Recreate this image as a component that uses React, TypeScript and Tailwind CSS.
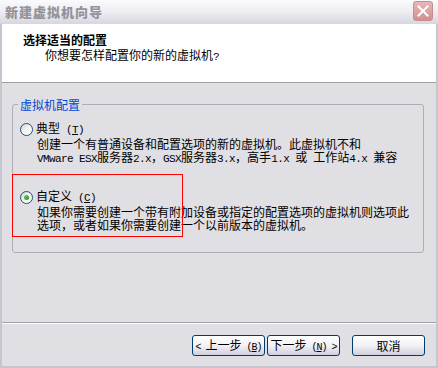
import React from "react";

function M({ children, tight }: { children: React.ReactNode; tight?: boolean }) {
  return (
    <span
      className={
        tight
          ? "font-['Liberation_Mono',monospace] text-[10px] tracking-[-1px]"
          : "font-['Liberation_Mono',monospace] text-[11px] tracking-[-0.6px]"
      }
    >
      {children}
    </span>
  );
}

function Radio({ checked }: { checked?: boolean }) {
  return (
    <span className="flex h-[13px] w-[13px] shrink-0 items-center justify-center rounded-full border border-[#1c5180] bg-gradient-to-br from-[#d4d4cc] via-[#f4f4f0] to-white">
      {checked && (
        <span className="h-[5px] w-[5px] rounded-full bg-gradient-to-br from-[#5fd35f] to-[#1f901f]" />
      )}
    </span>
  );
}

function XpButton({ children, className = "" }: { children: React.ReactNode; className?: string }) {
  return (
    <button
      className={
        "flex h-[21px] w-[73px] items-center justify-center rounded-[3px] border border-[#003c74] bg-gradient-to-b from-white via-[#f2f2f6] to-[#cfcfdf] text-[12px] leading-none text-black " +
        className
      }
    >
      <span className="whitespace-pre">{children}</span>
    </button>
  );
}

export default function App() {
  return (
    <div className="relative flex h-[368px] w-[438px] flex-col overflow-hidden bg-[#e0dfe3] font-['Noto_Sans_CJK_SC',sans-serif] text-[12px] leading-[13px] text-black">
      {/* title bar */}
      <div className="flex h-[24px] shrink-0 items-start justify-between bg-gradient-to-b from-[#fbfbfd] via-[#ededf2] to-[#d6d6e0] pl-[5px] pr-[5px] pt-[1px]">
        <span className="mt-[4px] text-[13px] font-black leading-[14px] tracking-[1px] text-[#939399]">
          新建虚拟机向导
        </span>
        <span className="flex h-[20px] w-[20px] items-center justify-center rounded-[3px] border border-[#c58d8d] bg-gradient-to-b from-[#e8b7b7] to-[#cf9090]">
          <svg width="12" height="12" viewBox="0 0 12 12">
            <path d="M1.5 1.5 L10.5 10.5 M10.5 1.5 L1.5 10.5" stroke="white" strokeWidth="2" strokeLinecap="square" />
          </svg>
        </span>
      </div>

      {/* window body with frame */}
      <div className="flex flex-1 flex-col border-x-2 border-b-2 border-[#c6c6d0]">
        <div className="h-[58px] shrink-0 bg-white pl-[21px] pt-[9px]">
          <div className="font-bold">选择适当的配置</div>
          <div className="mt-[2px] pl-[22px]">
            你想要怎样配置你的新的虚拟机<M>?</M>
          </div>
        </div>
        <div className="h-px shrink-0 bg-[#a0a0a0]" />

        <div className="flex flex-1 flex-col">
          <fieldset className="ml-[10px] mt-[15px] w-[412px] rounded-[3px] border border-[#aeadb3] pb-[21px] pl-[7px] pr-[6px] pt-[10px]">
            <legend className="-ml-[2px] px-[2px] text-[#0046d5]">虚拟机配置</legend>

            <div className="flex items-center gap-[3px]">
              <Radio />
              <span>
                典型<M> (<span className="underline">T</span>)</M>
              </span>
            </div>
            <div className="ml-[17px]">
              <div>创建一个有普通设备和配置选项的新的虚拟机。此虚拟机不和</div>
              <div>
                <M>VMware ESX</M>服务器<M>2.x</M>，<M>GSX</M>服务器<M>3.x</M>，高手<M>1.x </M>或<M> </M>工作站<M>4.x </M>兼容
              </div>
            </div>

            <div className="mt-[23px] flex items-center gap-[3px]">
              <Radio checked />
              <span>
                自定义<M> (<span className="underline">C</span>)</M>
              </span>
            </div>
            <div className="ml-[17px]">
              <div>如果你需要创建一个带有附加设备或指定的配置选项的虚拟机则选项此</div>
              <div>选项，或者如果你需要创建一个以前版本的虚拟机。</div>
            </div>
          </fieldset>

          <div className="flex-1" />

          <div className="h-px shrink-0 bg-[#a0a0a8]" />
          <div className="h-px shrink-0 bg-white" />
          <div className="flex h-[42px] shrink-0 items-start justify-end pr-[11px] pt-[11px]">
            <XpButton>
              <M tight>&lt; </M>上一步<M tight> (<span className="underline">B</span>)</M>
            </XpButton>
            <XpButton className="ml-[2px]">
              下一步<M tight> (<span className="underline">N</span>) &gt;</M>
            </XpButton>
            <XpButton className="ml-[12px]">取消</XpButton>
          </div>
        </div>
      </div>

      {/* annotation box */}
      <div className="pointer-events-none absolute left-[12px] top-[174px] h-[63px] w-[171px] border border-[#ff0000]" />
    </div>
  );
}
